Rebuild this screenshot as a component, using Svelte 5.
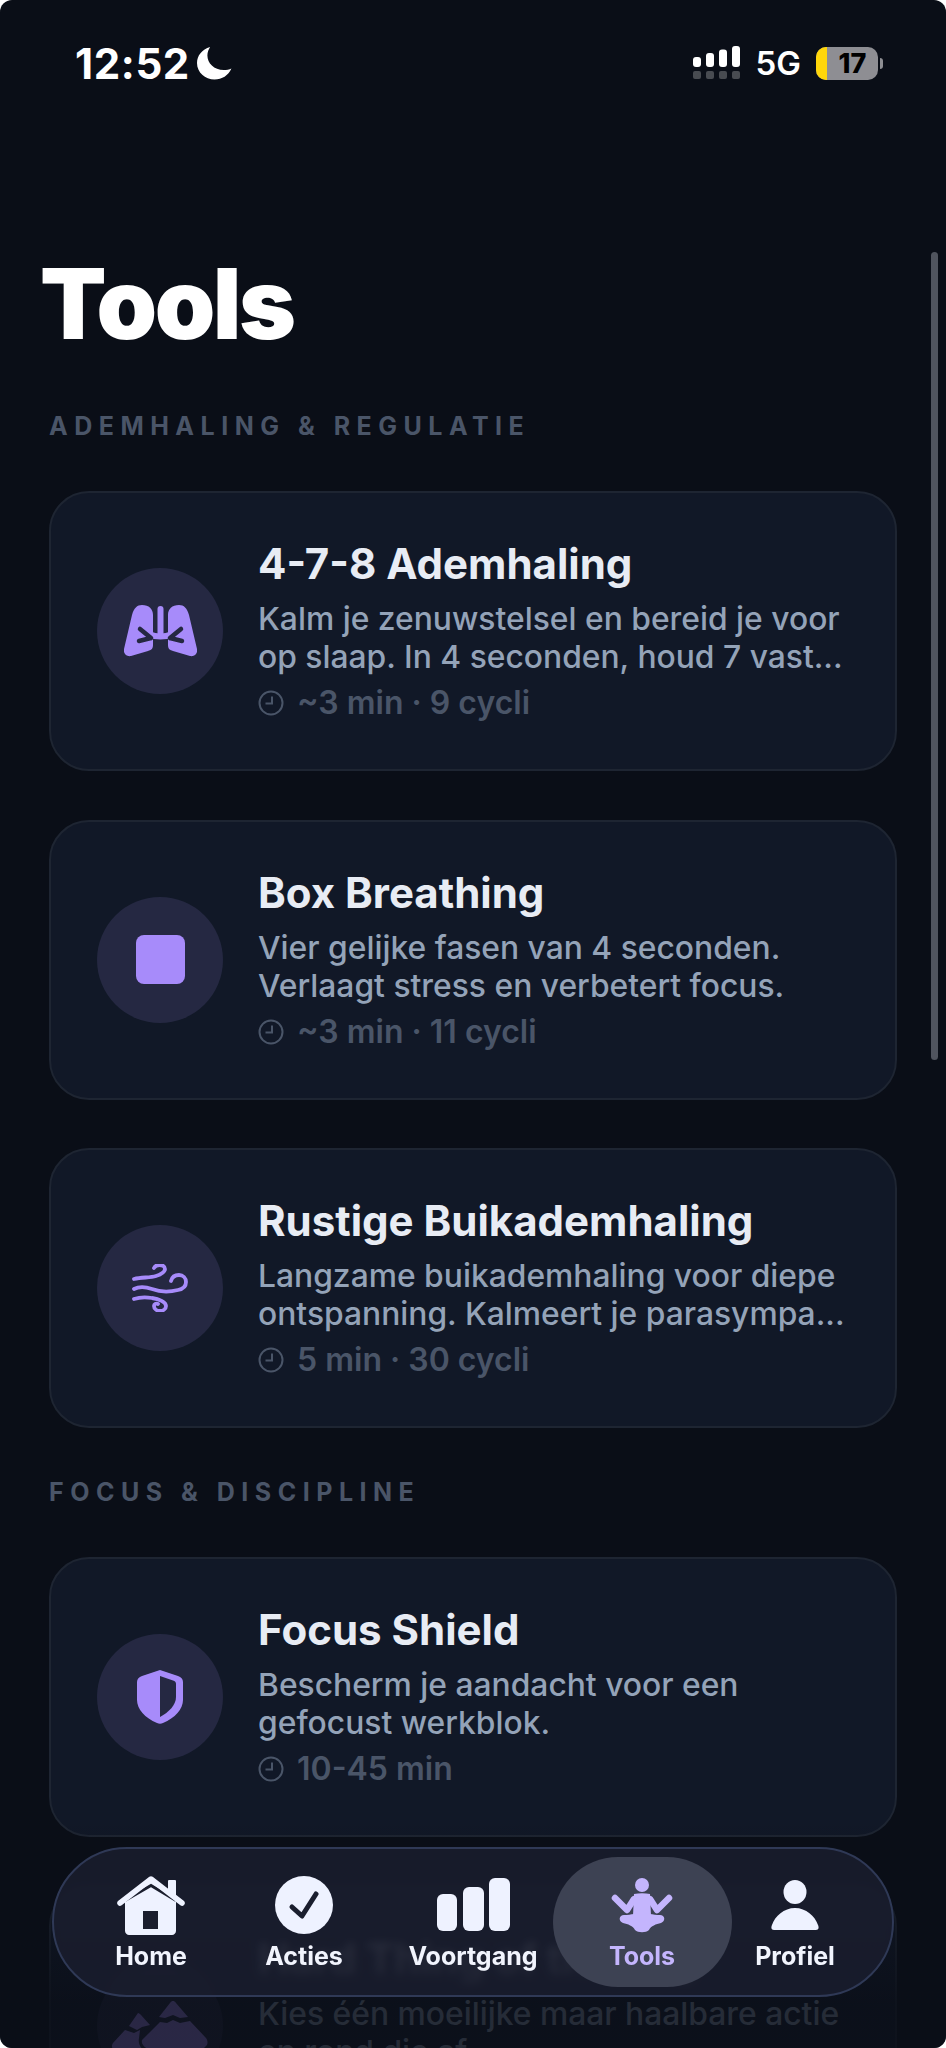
<script>
    const sections = [
        {
            title: 'ADEMHALING & REGULATIE',
            tools: [
                { id: 'lungs', name: '4-7-8 Ademhaling', lines: ['Kalm je zenuwstelsel en bereid je voor', 'op slaap. In 4 seconden, houd 7 vast...'], meta: '~3 min · 9 cycli' },
                { id: 'box', name: 'Box Breathing', lines: ['Vier gelijke fasen van 4 seconden.', 'Verlaagt stress en verbetert focus.'], meta: '~3 min · 11 cycli' },
                { id: 'wind', name: 'Rustige Buikademhaling', lines: ['Langzame buikademhaling voor diepe', 'ontspanning. Kalmeert je parasympa...'], meta: '5 min · 30 cycli' }
            ]
        },
        {
            title: 'FOCUS & DISCIPLINE',
            tools: [
                { id: 'shield', name: 'Focus Shield', lines: ['Bescherm je aandacht voor een', 'gefocust werkblok.'], meta: '10-45 min' },
                { id: 'mountain', name: 'Hard Thing of the Day', lines: ['Kies één moeilijke maar haalbare actie', 'en rond die af.'], meta: '15 min' }
            ]
        }
    ];

    const tabs = [
        { id: 'home', label: 'Home' },
        { id: 'check', label: 'Acties' },
        { id: 'bars', label: 'Voortgang' },
        { id: 'tools', label: 'Tools', active: true },
        { id: 'user', label: 'Profiel' }
    ];
</script>

<div class="screen">
    <header class="status">
        <div class="time">12:52
            <svg class="moon" width="35" height="34" viewBox="0 0 32 34" preserveAspectRatio="none">
                <path d="M12 1C4.500 3.500 0 9.500 0 17c0 9.500 7.500 16.500 16 16.500 7 0 12.500-4 15.500-11-2 1-4.500 1.500-7 1.500C15.500 24 9.500 17 9.500 9.500 9.500 6.500 10.500 3.500 12 1z" fill="#fff"/>
            </svg>
        </div>
        <div class="indicators">
            <svg width="48" height="34" viewBox="0 0 48 34">
                <g fill="#fff">
                    <rect x="0" y="11" width="8" height="10" rx="3"/>
                    <rect x="13" y="7" width="8" height="14" rx="3"/>
                    <rect x="26" y="3.500" width="8" height="17.500" rx="3"/>
                    <rect x="39" y="0" width="8" height="21" rx="3"/>
                </g>
                <g fill="#fff" opacity="0.25">
                    <rect x="0" y="25" width="8" height="8" rx="2"/>
                    <rect x="13" y="25" width="8" height="8" rx="2"/>
                    <rect x="26" y="25" width="8" height="8" rx="2"/>
                    <rect x="39" y="25" width="8" height="8" rx="2"/>
                </g>
            </svg>
            <span class="net">5G</span>
            <div class="battery"><span class="level"></span><span class="pct">17</span></div>
            <span class="nub"></span>
        </div>
    </header>

    <div class="scrollbar"></div>

    <main>
        <h1>Tools</h1>
        {#each sections as section}
            <h2>{section.title}</h2>
            {#each section.tools as tool}
                <article class="card">
                    <div class="badge">
                        {#if tool.id === 'lungs'}
                            <svg width="73" height="52" viewBox="0 0 73 52">
                                <path d="M18 0C25 0 29 4 29 10V40C29 44 27 45 24 46L7 51C2 52-1 48 0 44L8 10C10 3 13 0 18 0Z" fill="#a78bfa"/>
                                <path d="M73 44 65 10C63 3 60 0 55 0 48 0 44 4 44 10V40C44 44 46 45 49 46L66 51C71 52 74 48 73 44Z" fill="#a78bfa"/>
                                <rect x="33.500" y="1" width="6" height="30" rx="3" fill="#a78bfa"/>
                                <path d="M26 29.500c3 1.500 7 2 10.500 2s7.500-.5 10.500-2" stroke="#a78bfa" stroke-width="6" fill="none"/>
                                <path d="M16 24 27 33M15 36 27 33M57 24 46 33M58 36 46 33" stroke="#252842" stroke-width="4.500" stroke-linecap="round" fill="none"/>
                                <path d="M31 41c2-3 4-4 5.500-4s3.500 1 5.500 4" stroke="#252842" stroke-width="3.500" fill="none"/>
                            </svg>
                        {:else if tool.id === 'box'}
                            <span class="square"></span>
                        {:else if tool.id === 'wind'}
                            <svg width="56" height="48" viewBox="0 0 56 48" fill="none" stroke="#a78bfa" stroke-width="3.800" stroke-linecap="round">
                                <path d="M2 15C10 13 18 14 24 12 30 10 33 8 33 5 33 2 30 1 27.500 1 25 1 23 2 22 4"/>
                                <path d="M2 25C8 22 14 23 20 25 28 28 38 28 46 26 51 25 54 22 54 18 54 14 51 11 47 11 43 11 40 13 39 17"/>
                                <path d="M2 35C8 33 14 33 20 34 27 35 34 38 34 42 34 45 31 47 28 47 25 47 22 45 22 42 22 40 24 39 26 40"/>
                            </svg>
                        {:else if tool.id === 'shield'}
                            <svg width="46" height="54" viewBox="0 0 46 54">
                                <path d="M23 0 41 6c3 1 5 3 5 6v18c0 9-8 18-20 23-2 1-4 1-6 0C8 48 0 39 0 30V12c0-3 2-5 5-6z" fill="#a78bfa"/>
                                <path d="M23 6l13 4.500c2 .7 3 1.500 3 3.500v13C39 35 32 42 23 47z" fill="#252842"/>
                            </svg>
                        {:else}
                            <svg width="96" height="50" viewBox="0 0 96 50" fill="#a78bfa">
                                <path d="M61 0c1 0 2 .5 3 2l12 14-8 1-7-3-8 3-6-1L58 2c1-1.500 2-2 3-2z"/>
                                <path d="M26 12c1 0 2 1 3 2l9 10-8 2-5 3-8-4z"/>
                                <path d="M48 21l7 1 6-3 7 3 10-2 16 17c2 3 2 6 0 8l-3 3H36c-4-2-7-5-6-9z"/>
                                <path d="M13 29l9 3 6-3-1 8c-1 5 1 9 5 13H3c-3-2-4-5-2-8z"/>
                            </svg>
                        {/if}
                    </div>
                    <div class="body">
                        <h3>{tool.name}</h3>
                        <p>{tool.lines[0]}<br />{tool.lines[1]}</p>
                        <div class="meta">
                            <svg width="26" height="26" viewBox="0 0 26 26" fill="none" stroke="#4a5568" stroke-width="2">
                                <circle cx="13" cy="13" r="11.500"/>
                                <path d="M14 6.500v7H7.500"/>
                            </svg>
                            <span>{tool.meta}</span>
                        </div>
                    </div>
                </article>
            {/each}
        {/each}
    </main>

    <div class="fade"></div>

    <nav>
        {#each tabs as tab}
            <div class="tab" class:active={tab.active}>
                <div class="tab-icon">
                    {#if tab.id === 'home'}
                        <svg width="68" height="60" viewBox="0 0 68 60">
                            <path d="M8 25 34 6l25 19v31c0 2-2 4-4 4H12c-2 0-4-2-4-4z" fill="#eef2ff"/>
                            <rect x="26" y="36" width="15" height="18" fill="#1a1e2e"/>
                            <rect x="51" y="5" width="8" height="20" rx="1" fill="#eef2ff"/>
                            <path d="M8 25.500 34 10.500 59 25.500" fill="none" stroke="#1a1e2e" stroke-width="3"/>
                            <path d="M3 28 34 4l31 24" fill="none" stroke="#eef2ff" stroke-width="5.500" stroke-linecap="round" stroke-linejoin="round"/>
                        </svg>
                    {:else if tab.id === 'check'}
                        <svg width="58" height="58" viewBox="0 0 58 58">
                            <circle cx="29" cy="29" r="29" fill="#eef2ff"/>
                            <path d="M17 31l10 9 14-22" fill="none" stroke="#1a1e2e" stroke-width="5" stroke-linecap="round" stroke-linejoin="round"/>
                        </svg>
                    {:else if tab.id === 'bars'}
                        <svg width="73" height="53" viewBox="0 0 73 53" fill="#eef2ff">
                            <rect x="0" y="16" width="20" height="37" rx="6"/>
                            <rect x="26" y="9" width="21" height="44" rx="6"/>
                            <rect x="52" y="0" width="21" height="53" rx="6"/>
                        </svg>
                    {:else if tab.id === 'tools'}
                        <svg width="64" height="56" viewBox="0 0 64 56">
                            <circle cx="32" cy="8" r="7" fill="#c4b5fd"/>
                            <path d="M5 21 17 33l7-11h16l7 11 12-12" fill="none" stroke="#c4b5fd" stroke-width="6.500" stroke-linecap="round" stroke-linejoin="round"/>
                            <path d="M24 17c5-1 11-1 16 0l1 22H23z" fill="#c4b5fd"/>
                            <path d="M14 38c7 0 14-2 18-2s11 2 18 2c5 0 6 6 1 8-5 1-10 3-12 7-3 3-11 3-14 0-2-4-7-6-12-7-5-2-4-8 1-8z" fill="#c4b5fd"/>
                        </svg>
                    {:else}
                        <svg width="48" height="50" viewBox="0 0 48 50" fill="#eef2ff">
                            <ellipse cx="24" cy="12" rx="11.500" ry="12"/>
                            <path d="M3 50c-3 0-3-3-2-5 3-9 12-17 23-17s20 8 23 17c1 2 1 5-2 5z"/>
                        </svg>
                    {/if}
                </div>
                <span class="label">{tab.label}</span>
            </div>
        {/each}
    </nav>
</div>

<style>
    :global(body) {
        background: #fff;
    }

    .screen {
        position: relative;
        width: 946px;
        height: 2048px;
        overflow: hidden;
        border-radius: 12px;
        background: #0a0e17;
        font-family: Inter, "Liberation Sans", sans-serif;
    }

    .status {
        display: flex;
        justify-content: space-between;
        align-items: center;
        height: 34px;
        padding: 46px 63px 0 75px;
        color: #fff;
    }

    .time {
        display: flex;
        align-items: center;
        gap: 7px;
        font-size: 42px;
        font-weight: 700;
        letter-spacing: 0.6px;
    }

    .indicators {
        display: flex;
        align-items: center;
        gap: 15px;
    }

    .net {
        font-size: 33px;
        font-weight: 600;
    }

    .battery {
        position: relative;
        display: flex;
        width: 62px;
        height: 33px;
        overflow: hidden;
        border-radius: 10px;
        background: #8e8e93;
    }

    .level {
        width: 11px;
        background: #ffd60a;
    }

    .pct {
        flex: 1;
        text-align: center;
        color: #000;
        font-size: 27px;
        font-weight: 800;
        line-height: 33px;
    }

    .nub {
        width: 3px;
        height: 11px;
        margin-left: -13px;
        border-radius: 0 3px 3px 0;
        background: #8e8e93;
    }

    .scrollbar {
        position: absolute;
        top: 252px;
        right: 8px;
        width: 7px;
        height: 808px;
        border-radius: 4px;
        background: #50545e;
    }

    main {
        padding: 174px 49px 0;
    }

    h1 {
        margin: 0 0 0 -9px;
        color: #fff;
        font-size: 97px;
        font-weight: 900;
        line-height: 100px;
        letter-spacing: -2.500px;
    }

    h2 {
        margin: 57px 0 50px;
        color: #4a5568;
        font-size: 25px;
        font-weight: 700;
        line-height: 30px;
        letter-spacing: 6.500px;
    }

    .card + h2 {
        margin-top: 49px;
    }

    .card {
        box-sizing: border-box;
        display: flex;
        align-items: center;
        gap: 35px;
        height: 280px;
        margin-bottom: 48.500px;
        padding: 0 46px;
        border: 2px solid #1e2532;
        border-radius: 40px;
        background: #111827;
    }

    .badge {
        display: flex;
        flex: none;
        align-items: center;
        justify-content: center;
        width: 126px;
        height: 126px;
        border-radius: 50%;
        background: #252842;
    }

    .square {
        width: 49px;
        height: 49px;
        border-radius: 8px;
        background: #a78bfa;
    }

    .body {
        min-width: 0;
    }

    h3 {
        margin: 0 0 12px;
        color: #e8ecf4;
        font-size: 42px;
        font-weight: 700;
        line-height: 48px;
        white-space: nowrap;
    }

    p {
        margin: 0 0 8px;
        color: #94a3b8;
        font-size: 31.800px;
        font-weight: 500;
        line-height: 38px;
        white-space: nowrap;
    }

    .meta {
        display: flex;
        align-items: center;
        gap: 13px;
        color: #4a5568;
        font-size: 32px;
        font-weight: 600;
        line-height: 38px;
    }

    .fade {
        position: absolute;
        left: 0;
        right: 0;
        top: 1820px;
        bottom: 0;
        background: linear-gradient(to bottom, rgba(10, 14, 23, 0), rgba(10, 14, 23, 0.8) 80%);
    }

    nav {
        position: absolute;
        left: 52px;
        top: 1847px;
        box-sizing: border-box;
        display: grid;
        grid-template-columns: 127px 179px 159px 179px 127px;
        justify-content: center;
        align-items: center;
        width: 842px;
        height: 150px;
        border: 2px solid #2f3956;
        border-radius: 75px;
        background: rgba(26, 30, 46, 0.84);
        backdrop-filter: blur(4px);
    }

    .tab {
        display: flex;
        flex-direction: column;
        align-items: center;
        justify-content: center;
        gap: 5px;
        height: 130px;
        border-radius: 65px;
    }

    .tab.active {
        background: #3d4253;
    }

    .tab-icon {
        display: flex;
        align-items: center;
        justify-content: center;
        height: 62px;
    }

    .label {
        color: #f1f4fd;
        font-size: 25px;
        font-weight: 700;
        line-height: 30px;
        white-space: nowrap;
    }

    .active .label {
        color: #c4b5fd;
    }
</style>
